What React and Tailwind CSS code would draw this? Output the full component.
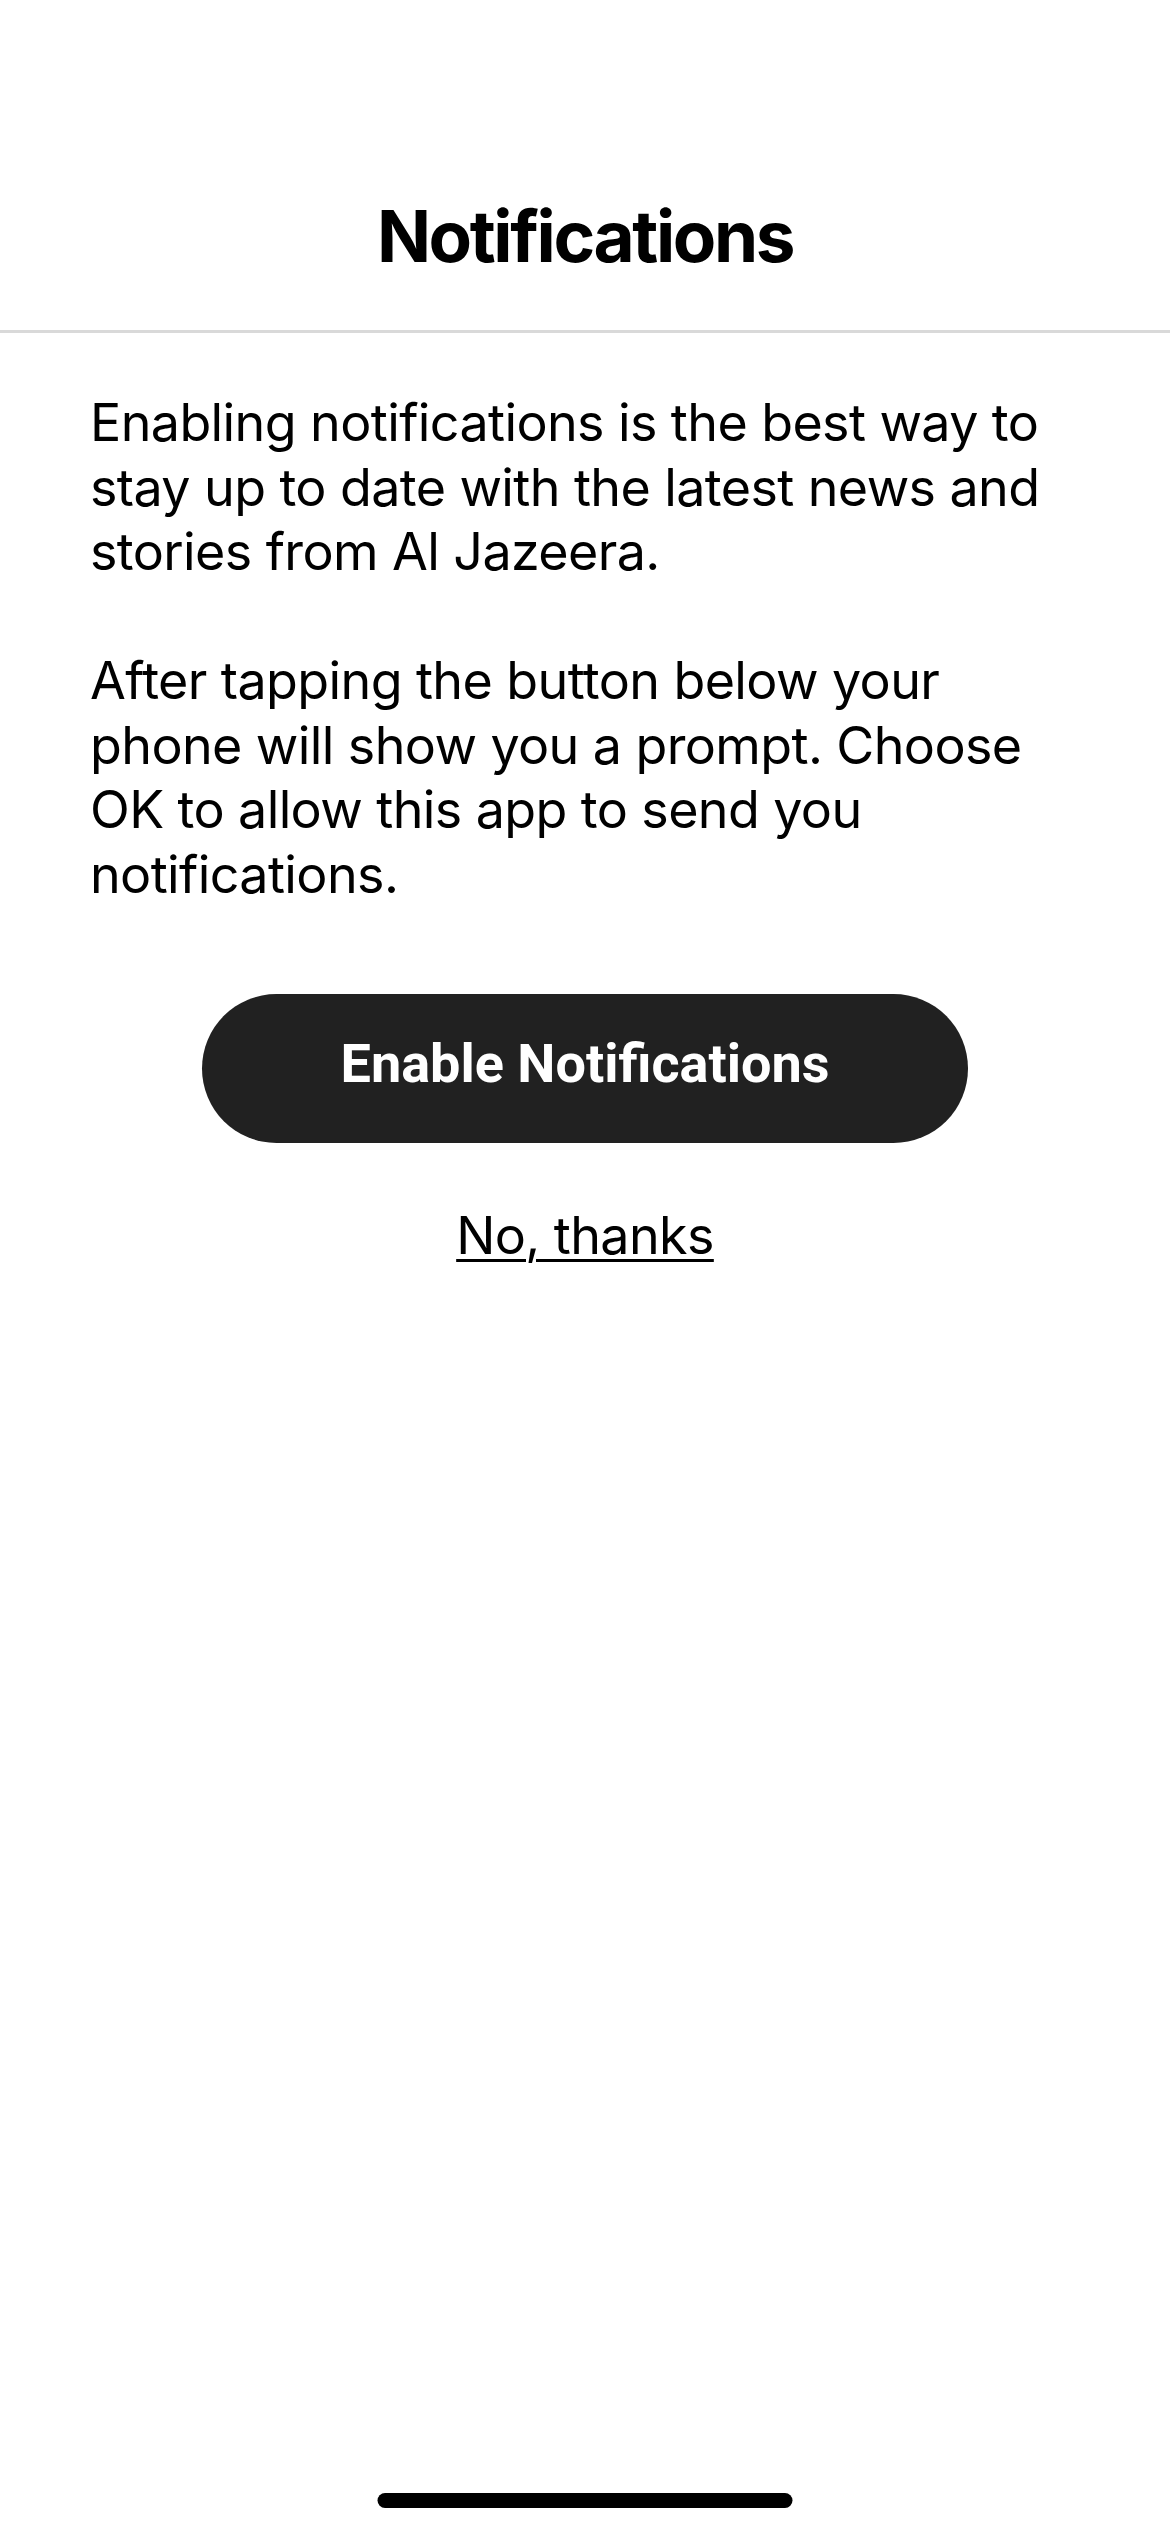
export default function App() {
  return (
    <div className="relative min-h-[2532px] w-full bg-white text-black" style={{ fontFamily: 'Inter, "Noto Sans", sans-serif' }}>
      <header className="flex justify-center border-b-[3px] border-[#d9d9d9] pt-[201px] pb-[58px]">
        <h1 className="text-[71px] leading-[71px] font-bold tracking-[-2.4px]">Notifications</h1>
      </header>
      <main className="flex flex-col items-center pt-[58px]">
        <div className="w-full px-[90px] text-[52px] leading-[64.5px] tracking-[-0.6px]">
          <p>Enabling notifications is the best way to stay up to date with the latest news and stories from Al Jazeera.</p>
          <p className="mt-[64.5px]">After tapping the button below your phone will show you a prompt. Choose OK to allow this app to send you notifications.</p>
        </div>
        <button className="mt-[87px] flex h-[149px] w-[766px] items-center justify-center rounded-full bg-[#212121] pb-[10px] text-white">
          <span className="text-[54px] leading-[54px] font-bold" style={{ fontFamily: 'Roboto, sans-serif' }}>Enable Notifications</span>
        </button>
        <button className="mt-[61px] text-[52px] leading-[64px] underline decoration-[3px] underline-offset-[5px] tracking-[-0.6px]">No, thanks</button>
      </main>
      <div className="absolute bottom-[24px] left-1/2 h-[15px] w-[415px] -translate-x-1/2 rounded-full bg-black" />
    </div>
  );
}
